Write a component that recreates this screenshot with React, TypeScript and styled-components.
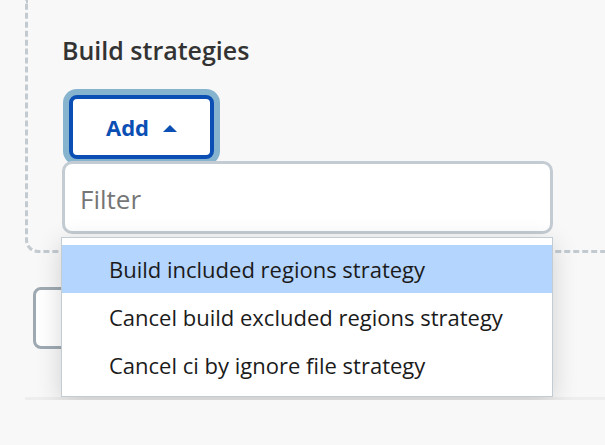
import { FC } from 'react';
import styled, { createGlobalStyle } from 'styled-components';

const GlobalStyle = createGlobalStyle`
  html, body {
    margin: 0;
    padding: 0;
    overflow: hidden;
    background: #f8f8f8;
    font-family: 'Open Sans', 'Noto Sans', sans-serif;
  }
`;

const strategies = [
  'Build included regions strategy',
  'Cancel build excluded regions strategy',
  'Cancel ci by ignore file strategy',
];

const App: FC = () => {
  return (
    <>
      <GlobalStyle />
      <Page>
        <Section>
          <Heading>Build strategies</Heading>
          <AddWrap>
            <AddButton type="button">
              Add
              <Caret />
            </AddButton>
            <Popup>
              <FilterInput placeholder="Filter" />
              <Menu>
                {strategies.map((label, i) => (
                  <MenuItem key={label} $active={i === 0}>
                    {label}
                  </MenuItem>
                ))}
              </Menu>
            </Popup>
          </AddWrap>
        </Section>
        <Actions>
          <SaveButton type="button" aria-label="Save" />
        </Actions>
      </Page>
    </>
  );
};

export default App;

const Page = styled.div`
  padding-left: 25px;
`;

const Section = styled.section`
  margin-right: -80px;
  padding: 35px 0 91px 34px;
  border: 3px dashed #c3cbd1;
  border-top: none;
  border-bottom-left-radius: 13px;
`;

const Heading = styled.h2`
  margin: 0 0 30px;
  font-weight: 600;
  font-size: 25px;
  line-height: 30px;
  color: #333;
`;

const AddWrap = styled.div`
  position: relative;
  height: 64px;
`;

const AddButton = styled.button`
  display: flex;
  align-items: center;
  justify-content: center;
  gap: 14px;
  margin-left: 7px;
  width: 145px;
  height: 64px;
  padding: 0;
  border: 4px solid #0b4fb4;
  border-radius: 8px;
  background: #fff;
  box-shadow: 0 0 0 6px #86b4ce;
  font-family: inherit;
  font-weight: 700;
  font-size: 22px;
  color: #0b4fb4;
`;

const Caret = styled.span`
  width: 0;
  height: 0;
  margin-top: 3px;
  border-left: 7px solid transparent;
  border-right: 7px solid transparent;
  border-bottom: 7px solid currentColor;
`;

const Popup = styled.div`
  position: absolute;
  top: 66px;
  left: 0;
  width: 491px;
  z-index: 10;
`;

const FilterInput = styled.input`
  display: block;
  box-sizing: border-box;
  width: 100%;
  height: 73px;
  padding: 3px 15px 0;
  border: 3px solid #c4ccd3;
  border-radius: 10px;
  background: #fff;
  font-family: inherit;
  font-size: 26px;
  color: #333;
  outline: none;

  &::placeholder {
    color: #767676;
  }
`;

const Menu = styled.ul`
  margin: 3px 0 0 -1px;
  padding: 7px 0;
  list-style: none;
  background: #fff;
  border: 1px solid #c4ccd3;
  box-shadow: 0 6px 24px rgba(0, 0, 0, 0.16);
`;

const MenuItem = styled.li<{ $active?: boolean }>`
  height: 48px;
  padding-left: 47px;
  font-size: 22px;
  line-height: 48px;
  color: #1b1b1b;
  white-space: nowrap;
  background: ${({ $active }) => ($active ? '#b4d5fe' : 'transparent')};
`;

const Actions = styled.div`
  padding: 34px 0 48px 8px;
  border-bottom: 3px solid #eeeeee;
`;

const SaveButton = styled.button`
  display: block;
  width: 120px;
  height: 62px;
  border: 3px solid #9ea9b1;
  border-radius: 8px;
  background: #fff;
`;
